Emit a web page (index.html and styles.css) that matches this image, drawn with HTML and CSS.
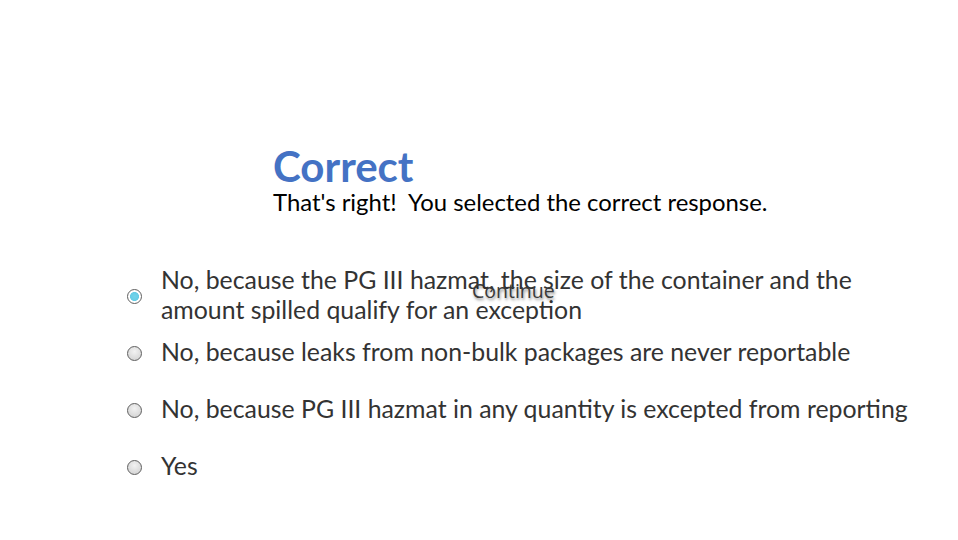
FILE: index.html
```html
<!DOCTYPE html>
<html>
<head>
<meta charset="utf-8">
<link rel="stylesheet" href="styles.css">
</head>
<body>
<div class="page">
  <div class="feedback">
    <h1 class="title">Correct</h1>
    <p class="message">That's right!&nbsp; You selected the correct response.</p>
  </div>
  <div class="quiz">
    <ul class="options">
      <li class="option">
        <span class="radio checked"></span>
        <span class="label">No, because the PG III hazmat, the size of the container and the amount spilled qualify for an exception</span>
      </li>
      <li class="option">
        <span class="radio"></span>
        <span class="label">No, because leaks from non-bulk packages are never reportable</span>
      </li>
      <li class="option">
        <span class="radio"></span>
        <span class="label">No, because PG III hazmat in any quantity is excepted from reporting</span>
      </li>
      <li class="option">
        <span class="radio"></span>
        <span class="label">Yes</span>
      </li>
    </ul>
    <button class="continue">Continue</button>
  </div>
</div>
</body>
</html>
```

FILE: styles.css
```css
html, body {
  margin: 0;
  padding: 0;
  background: #ffffff;
}
body {
  font-family: Lato, "Liberation Sans", sans-serif;
  width: 958px;
  height: 540px;
  overflow: hidden;
}
.page {
  padding-top: 144px;
}
.feedback {
  padding-left: 273px;
}
.title {
  margin: 0;
  font-size: 42px;
  font-weight: 700;
  color: #4472c4;
  line-height: 45px;
}
.message {
  margin: 0;
  font-size: 23.9px;
  line-height: 26px;
  color: #000000;
}
.quiz {
  position: relative;
  margin-top: 50px;
}
.options {
  list-style: none;
  margin: 0;
  padding: 0 0 0 127px;
  display: flex;
  flex-direction: column;
}
.option {
  display: flex;
  align-items: center;
  gap: 19px;
  height: 57px;
}
.label {
  font-size: 24.85px;
  line-height: 30px;
  color: #333333;
  width: 760px;
}
.radio {
  flex: none;
  box-sizing: border-box;
  width: 15px;
  height: 15px;
  margin-top: 5px;
  border-radius: 50%;
  border: 1px solid #5f5f5f;
  background: radial-gradient(circle at 50% 35%, #f2f2f2 0%, #d9d9d9 70%, #c9c9c9 100%);
}
.radio.checked {
  background: radial-gradient(circle, #72d3ea 0, #66cde6 4.2px, #ffffff 4.8px, #ffffff 100%);
}
.continue {
  position: absolute;
  left: 472px;
  top: 12px;
  border: none;
  background: transparent;
  padding: 0;
  font-family: "Open Sans", sans-serif;
  font-size: 19.5px;
  color: #3a3a3a;
  text-shadow: 1px 2px 3px rgba(0,0,0,0.45);
}
```
